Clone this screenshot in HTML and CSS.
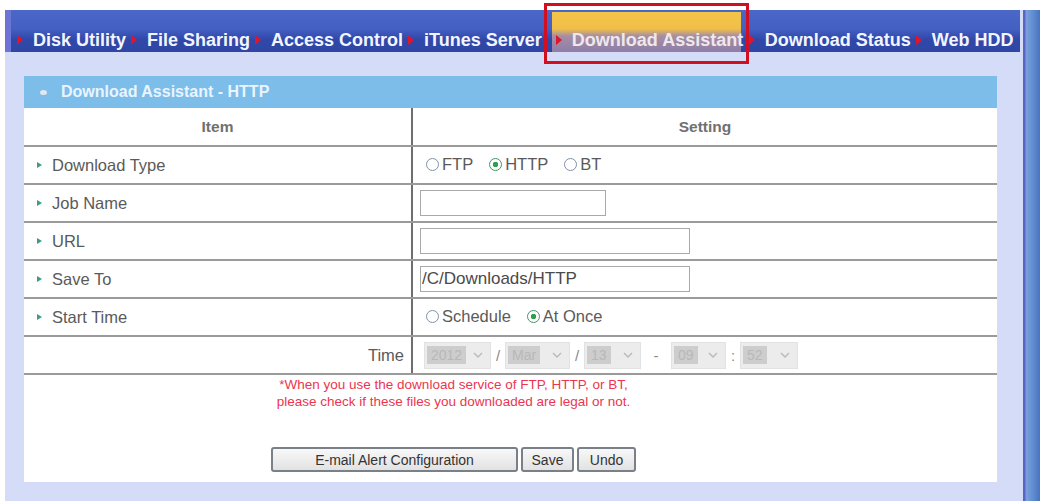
FILE: index.html
```html
<!DOCTYPE html>
<html>
<head>
<meta charset="utf-8">
<title>Download Assistant - HTTP</title>
<link rel="stylesheet" href="styles.css">
</head>
<body>
<div class="window">
  <div class="main">
    <nav class="nav">
      <span class="nav-item"><i class="mark"></i>Disk Utility</span>
      <span class="nav-item"><i class="mark"></i>File Sharing</span>
      <span class="nav-item"><i class="mark"></i>Access Control</span>
      <span class="nav-item"><i class="mark"></i>iTunes Server</span>
      <span class="nav-item active"><i class="mark"></i>Download Assistant<span class="highlight"></span></span>
      <span class="nav-item"><i class="mark"></i>Download Status</span>
      <span class="nav-item"><i class="mark"></i>Web HDD</span>
    </nav>
    <div class="content">
      <section class="panel">
        <div class="panel-head"><i class="head-dot"></i>Download Assistant - HTTP</div>
        <table class="grid">
          <colgroup><col class="c1"><col class="c2"></colgroup>
          <tr class="th"><td>Item</td><td>Setting</td></tr>
          <tr><td class="lbl"><i class="bul"></i>Download Type</td>
            <td class="val"><label class="opt"><input type="radio" name="t">FTP</label><label class="opt"><input type="radio" name="t" checked>HTTP</label><label class="opt"><input type="radio" name="t">BT</label></td></tr>
          <tr><td class="lbl"><i class="bul"></i>Job Name</td>
            <td class="val"><input class="txt short" type="text" value=""></td></tr>
          <tr><td class="lbl"><i class="bul"></i>URL</td>
            <td class="val"><input class="txt long" type="text" value=""></td></tr>
          <tr><td class="lbl"><i class="bul"></i>Save To</td>
            <td class="val"><input class="txt long" type="text" value="/C/Downloads/HTTP"></td></tr>
          <tr><td class="lbl"><i class="bul"></i>Start Time</td>
            <td class="val"><label class="opt"><input type="radio" name="s">Schedule</label><label class="opt"><input type="radio" name="s" checked>At Once</label></td></tr>
          <tr><td class="lbl right">Time</td>
            <td class="val">
              <div class="time">
                <span class="sel w-year"><span class="sv">2012</span><svg class="chev" viewBox="0 0 10 6"><path d="M1 1 L5 5 L9 1" /></svg></span>
                <span class="sep">/</span>
                <span class="sel w-mon"><span class="sv">Mar</span><svg class="chev" viewBox="0 0 10 6"><path d="M1 1 L5 5 L9 1" /></svg></span>
                <span class="sep">/</span>
                <span class="sel w-day"><span class="sv">13</span><svg class="chev" viewBox="0 0 10 6"><path d="M1 1 L5 5 L9 1" /></svg></span>
                <span class="sep wide">-</span>
                <span class="sel w-hr"><span class="sv">09</span><svg class="chev" viewBox="0 0 10 6"><path d="M1 1 L5 5 L9 1" /></svg></span>
                <span class="sep">:</span>
                <span class="sel w-min"><span class="sv">52</span><svg class="chev" viewBox="0 0 10 6"><path d="M1 1 L5 5 L9 1" /></svg></span>
              </div>
            </td></tr>
        </table>
        <div class="foot">
          <p class="note">*When you use the download service of FTP, HTTP, or BT,<br>please check if these files you downloaded are legal or not.</p>
          <div class="buttons">
            <button class="btn email">E-mail Alert Configuration</button>
            <button class="btn save">Save</button>
            <button class="btn undo">Undo</button>
          </div>
        </div>
      </section>
    </div>
  </div>
  <div class="edge"></div>
</div>
</body>
</html>
```
FILE: styles.css
```css
* { box-sizing: border-box; }
html, body { margin: 0; padding: 0; }
body {
  background: #ffffff;
  font-family: "Liberation Sans", Arial, sans-serif;
  width: 1040px;
  height: 501px;
  overflow: hidden;
}
.window {
  display: flex;
  height: 501px;
  padding-top: 10px;
}
.main {
  flex: 1;
  margin-left: 5px;
  background: #d5dcf7;
  display: flex;
  flex-direction: column;
}
.nav {
  height: 42px;
  background: linear-gradient(#4b67c8 0%, #4360c2 45%, #3048aa 70%, #2f46a4 100%);
  border-left: 6px solid #6c74d6;
  margin-right: 3px;
  display: flex;
  align-items: center;
  padding-left: 6px;
  padding-top: 18px;
  white-space: nowrap;
  color: #f2f5ff;
  font-weight: bold;
  font-size: 18px;
}
.nav-item {
  display: flex;
  align-items: center;
  height: 24px;
  position: relative;
}
.mark {
  display: inline-block;
  flex: none;
  width: 0;
  height: 0;
  border-top: 5px solid transparent;
  border-bottom: 5px solid transparent;
  border-left: 6px solid #e0142a;
  margin: 0 10px 0 5px;
}
.nav-item:first-child .mark { margin-left: 0; }
.active {
  width: 189px;
  flex: none;
  height: 40px;
  margin-top: -16px;
  margin-left: 10px;
  padding-top: 16px;
  padding-left: 4px;
  background: linear-gradient(#f4c448 0%, #f1bf48 42%, #a58ea4 60%, #8e7ea8 100%);
  color: #efe8ea;
}
.active .mark { margin-left: 0; }
.active + .nav-item .mark { margin-left: 8px; }
.highlight {
  position: absolute;
  left: -8px;
  top: -9px;
  width: 205px;
  height: 61px;
  border: 3px solid #d20f20;
}
.content {
  flex: 1;
  padding: 24px 26px 19px 19px;
}
.panel {
  background: #ffffff;
  height: 406px;
  display: flex;
  flex-direction: column;
}
.panel-head {
  height: 32px;
  background: #7cbde9;
  color: #eaf4ff;
  font-weight: bold;
  font-size: 16px;
  display: flex;
  align-items: center;
  padding-left: 16px;
}
.head-dot {
  display: inline-block;
  width: 7px;
  height: 5px;
  border-radius: 50%;
  background: #e4e8ee;
  margin-right: 14px;
}
.grid {
  width: 100%;
  border-collapse: collapse;
  color: #5a5a5a;
  font-size: 16.5px;
}
.c1 { width: 388px; }
.grid td {
  height: 38px;
  padding: 0;
  border-bottom: 2px solid #9a9a9a;
  vertical-align: middle;
}
.grid td:first-child { border-right: 2px solid #6e6e6e; }
.th td {
  text-align: center;
  font-weight: bold;
  font-size: 15.5px;
  color: #707070;
}
.lbl { padding-left: 13px !important; }
.lbl.right { text-align: right; padding-right: 7px !important; }
.bul {
  display: inline-block;
  width: 0;
  height: 0;
  border-top: 3px solid transparent;
  border-bottom: 3px solid transparent;
  border-left: 5px solid #3a9c84;
  margin-right: 10px;
  vertical-align: middle;
  position: relative;
  top: -1px;
}
.val { padding-left: 7px !important; }
.opt {
  display: inline-flex;
  align-items: center;
  margin-right: 10px;
  color: #5a5a5a;
}
.opt input {
  appearance: none;
  -webkit-appearance: none;
  width: 13px;
  height: 13px;
  border: 1.5px solid #7e92aa;
  border-radius: 50%;
  margin: 0 3px 0 6px;
  background: #fff;
}
.opt input:checked {
  border-color: #3c9a66;
  background: radial-gradient(circle, #2f9e4e 0 2.5px, #ffffff 3px);
}
.txt {
  height: 26px;
  border: 1px solid #a9a9a9;
  font-family: "Liberation Sans", Arial, sans-serif;
  font-size: 17px;
  color: #4a4a4a;
  padding: 0 1px;
  vertical-align: middle;
}
.short { width: 186px; }
.long { width: 270px; }
.time {
  display: flex;
  align-items: center;
  padding-left: 4px;
  color: #9a9a9a;
  font-size: 15px;
}
.sel {
  display: inline-flex;
  align-items: center;
  height: 27px;
  background: #ececec;
  border: 1px solid #e2e2e2;
  padding-left: 2px;
}
.sv {
  background: #cdcdcd;
  color: #b8b8b8;
  font-size: 14px;
  line-height: 18px;
  padding: 0 4px;
}
.chev {
  width: 10px;
  height: 6px;
  margin-left: auto;
  margin-right: 7px;
  fill: none;
  stroke: #b9b9b9;
  stroke-width: 1.4;
}
.w-year { width: 67px; }
.w-mon { width: 65px; }
.w-day { width: 57px; }
.w-hr { width: 55px; }
.w-min { width: 58px; }
.sep { width: 14px; text-align: center; color: #8a8a8a; }
.sep.wide { width: 30px; }
.foot {
  flex: 1;
  display: flex;
  flex-direction: column;
  align-items: center;
  padding-right: 114px;
}
.note {
  margin: 1px 0 0;
  text-align: center;
  color: #ec3550;
  font-size: 13.5px;
  line-height: 17px;
}
.buttons {
  display: flex;
  gap: 3px;
  margin-top: 37px;
}
.btn {
  height: 25px;
  border: 2px solid #7a8088;
  border-radius: 3px;
  background: linear-gradient(#f8f8f8, #e2e2e2);
  font-family: "Liberation Sans", Arial, sans-serif;
  font-size: 14px;
  color: #333;
  padding: 0;
}
.email { width: 247px; }
.save { width: 53px; }
.undo { width: 59px; }
.edge {
  width: 17px;
  background: linear-gradient(90deg, #5a64c8 0 2px, #7aa2dc 3px, #5f8cd2 60%, #4a72c0 100%);
}
```
